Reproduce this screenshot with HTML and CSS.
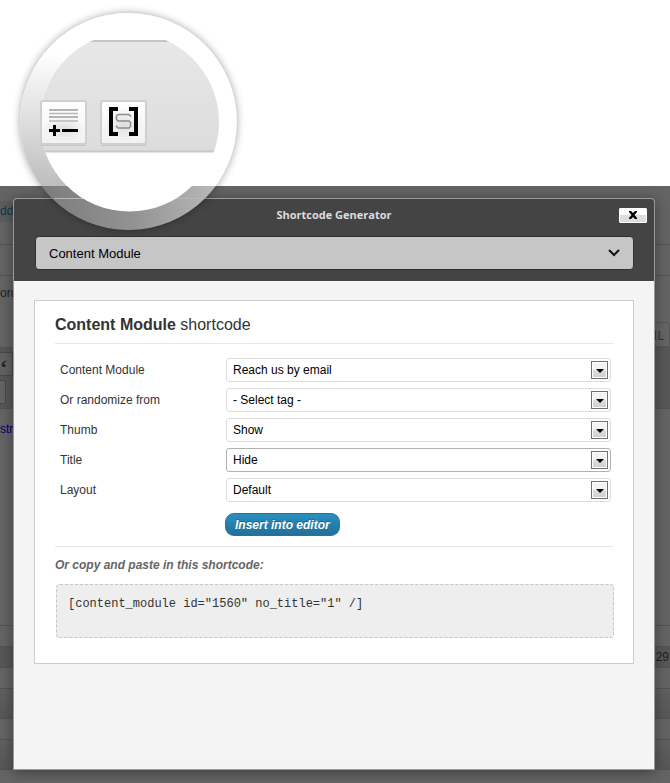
FILE: index.html
```html
<!DOCTYPE html>
<html lang="en">
<head>
<meta charset="utf-8">
<title>Shortcode Generator</title>
<link rel="stylesheet" href="styles.css">
</head>
<body>
<div class="stage">
  <div class="page" aria-hidden="true">
    <div class="row row-top"><span class="page-link">dd</span></div>
    <div class="row row-gap"></div>
    <div class="row row-words"><span>ord</span><span class="tab">HTML</span></div>
    <div class="row row-tools"><span class="tool">‘</span><span class="tool tool-small"></span></div>
    <div class="row row-editor">stru</div>
    <div class="row row-line"></div>
    <div class="row row-line row-dark"><span class="time">29</span></div>
    <div class="row row-line"></div>
    <div class="row row-head"></div>
    <div class="row row-line"></div>
    <div class="row row-head"></div>
    <div class="row row-last"></div>
  </div>

  <main class="dialog">
    <header class="dialog-head">
      <div class="title-bar">
        <h1>Shortcode Generator</h1>
        <button class="close" type="button" aria-label="Close">
          <svg width="10" height="8" viewBox="0 0 10 8"><path d="M1 0h2l2 2 2-2h2v1L6.500 4 9 7v1H7L5 6 3 8H1V7l2.500-3L1 1z"/></svg>
        </button>
      </div>
      <div class="picker">
        <select aria-label="Shortcode type"><option>Content Module</option></select>
        <svg class="chevron" width="12" height="8" viewBox="0 0 12 8"><path d="M1 1l5 5 5-5" fill="none" stroke="#111" stroke-width="2"/></svg>
      </div>
    </header>

    <form class="panel">
      <h2><strong>Content Module</strong> shortcode</h2>
      <div class="fields">
        <label for="module">Content Module</label>
        <div class="field"><select id="module"><option>Reach us by email</option></select><span class="arrow"></span></div>
        <label for="random">Or randomize from</label>
        <div class="field"><select id="random"><option>- Select tag -</option></select><span class="arrow"></span></div>
        <label for="thumb">Thumb</label>
        <div class="field"><select id="thumb"><option>Show</option></select><span class="arrow"></span></div>
        <label for="title">Title</label>
        <div class="field active"><select id="title"><option>Hide</option></select><span class="arrow"></span></div>
        <label for="layout">Layout</label>
        <div class="field"><select id="layout"><option>Default</option></select><span class="arrow"></span></div>
      </div>
      <button class="insert" type="button">Insert into editor</button>
      <div class="copy">
        <label for="code">Or copy and paste in this shortcode:</label>
        <textarea id="code" readonly>[content_module id="1560" no_title="1" /]</textarea>
      </div>
    </form>
  </main>
</div>

<svg class="lens" width="260" height="244" viewBox="0 0 260 244" aria-hidden="true">
  <defs>
    <linearGradient id="ringLight" gradientUnits="userSpaceOnUse" x1="45" y1="186" x2="62" y2="30">
      <stop offset="0" stop-color="#bdbdbd"/><stop offset=".4" stop-color="#dedede"/><stop offset=".85" stop-color="#fff"/>
    </linearGradient>
    <linearGradient id="ringDark" gradientUnits="userSpaceOnUse" x1="45" y1="200" x2="215" y2="186">
      <stop offset="0" stop-color="#7d7d7d"/><stop offset=".5" stop-color="#929292"/><stop offset="1" stop-color="#b8b8b8"/>
    </linearGradient>
    <linearGradient id="bar" x1="0" y1="0" x2="0" y2="1">
      <stop offset="0" stop-color="#e8e8e8"/><stop offset="1" stop-color="#dcdcdc"/>
    </linearGradient>
    <linearGradient id="key" x1="0" y1="0" x2="0" y2="1">
      <stop offset="0" stop-color="#fff"/><stop offset="1" stop-color="#f1f1f1"/>
    </linearGradient>
    <radialGradient id="keyShade"><stop offset="0" stop-color="#dedede"/><stop offset="1" stop-color="#dedede" stop-opacity="0"/></radialGradient>
    <filter id="soft" x="-20%" y="-20%" width="140%" height="140%"><feGaussianBlur stdDeviation="5"/></filter>
    <clipPath id="above"><path d="M0 0h260v186H0z"/></clipPath>
    <clipPath id="below"><path d="M0 186h260v58H0z"/></clipPath>
    <clipPath id="glass"><circle cx="129.500" cy="122" r="89.500"/></clipPath>
  </defs>
  <circle cx="128.500" cy="121.500" r="107" fill="#000" opacity=".5" filter="url(#soft)"/>
  <circle cx="128.500" cy="121.500" r="108.500" fill="#fff" clip-path="url(#above)"/>
  <path d="M128.500 13A108.500 108.500 0 0 0 128.500 230V121z" fill="url(#ringLight)" clip-path="url(#above)"/>
  <circle cx="128.500" cy="121.500" r="108.500" fill="url(#ringDark)" clip-path="url(#below)"/>
  <path d="M54 198.500H204" stroke="#b8b8b8"/>
  <g clip-path="url(#glass)">
    <path fill="#fff" d="M39 32h182v182H39z"/>
    <path fill="url(#bar)" d="M39 40h182v112H39z"/>
    <path d="M39 41h182" stroke="#c5c5c5" stroke-width="2"/>
    <path d="M39 151.500h182" stroke="#c8c8c8" stroke-width="2"/>
  </g>
  <g fill="url(#key)" stroke="#cfcfcf" stroke-width="2">
    <rect x="41" y="101" width="45" height="43" rx="2"/>
    <rect x="101" y="101" width="45" height="43" rx="2"/>
  </g>
  <ellipse cx="64" cy="129" rx="20" ry="12" fill="url(#keyShade)"/>
  <ellipse cx="124" cy="125" rx="20" ry="16" fill="url(#keyShade)"/>
  <path d="M49 110h29M49 117h29" stroke="#b4b4b4" stroke-width="2"/>
  <path d="M49 113.500h29M49 121h29" stroke="#b8b8b8" stroke-width="1.500"/>
  <path d="M49 129h4v-4h3v4h4v3h-4v4h-3v-4h-4zM62 129h16v3H62z"/>
  <path d="M109 107h9v4h-5v21h5v4h-9zM138 107h-9v4h5v21h-5v4h9z"/>
  <path d="M130.500 117v-1l-1.500-1.500h-11l-1.500 1.500v3.500l1.500 1.500h11l1.500 1.500v4l-1.500 1.500h-11l-1.500-1.500v-1" fill="none" stroke="#8b8b8b" stroke-width="1.500"/>
  <path d="M41 145.500h45M101 145.500h45" stroke="#c6c6c6"/>
</svg>
</body>
</html>
```

FILE: styles.css
```css
* { box-sizing: border-box; }

body {
  margin: 0;
  background: #fff;
  color: #333;
  font-family: "Liberation Sans", Arial, sans-serif;
  font-size: 12px;
}

.stage {
  position: relative;
  margin-top: 186px;
  padding: 12px 15px 13px 13px;
  background: #646464;
  overflow: hidden;
}

.page {
  position: absolute;
  inset: 0;
  display: flex;
  flex-direction: column;
  font-size: 12px;
  color: #222;
}

.row { flex: none; border-bottom: 1px solid #535353; }
.row-top { height: 59px; padding-top: 15px; }
.page-link { display: block; width: 13px; height: 21px; line-height: 21px; background: #5d5d5d; color: #0e3a4c; }
.row-gap { height: 31px; }
.row-words { height: 72px; display: flex; justify-content: space-between; padding-top: 10px; }
.tab {
  align-self: flex-end;
  height: 25px;
  padding: 0 5px;
  border: 1px solid #565656;
  border-radius: 3px 3px 0 0;
  font: 13px/25px "Open Sans", sans-serif;
  color: #333;
}
.row-tools { height: 61px; padding-top: 4px; background: #575757; }
.tool {
  display: block;
  width: 13px;
  height: 24px;
  margin-bottom: 4px;
  border: 1px solid #484848;
  border-left: 0;
  border-radius: 0 2px 2px 0;
  background: #626262;
  font: bold 22px/30px "Liberation Serif", serif;
}
.tool-small { width: 6px; }
.row-editor { height: 217px; padding-top: 13px; color: #00006b; }
.row-line { height: 21px; }
.row-dark { background: #575757; text-align: right; line-height: 20px; }
.time { padding-right: 1px; }
.row-head { height: 30px; background: linear-gradient(#606060, #575757); }
.row-last { flex: 1; border-bottom: 0; }

.dialog {
  position: relative;
  min-height: 572px;
  border: 1px solid #9a9a9a;
  border-radius: 4px 4px 0 0;
  background: #f4f4f4;
  box-shadow: 0 2px 14px rgba(0, 0, 0, 0.4);
}

.dialog-head {
  padding: 7px 20px 11px 21px;
  border-radius: 3px 3px 0 0;
  background: #444;
}

.title-bar {
  display: grid;
  grid-template-columns: 1fr auto 1fr;
  align-items: center;
  height: 30px;
  margin: 0 -13px 0 -14px;
  padding-bottom: 12px;
}

h1 {
  grid-column: 2;
  margin: 0;
  font: bold 11px/16px "Open Sans", sans-serif;
  color: #ddd;
}

.close {
  justify-self: end;
  display: grid;
  place-items: center;
  width: 28px;
  height: 15px;
  padding: 0;
  border: 1px solid #fff;
  border-radius: 1px;
  background: linear-gradient(#fff 50%, #ddd 50%);
}

.picker, .field { position: relative; }

select {
  display: block;
  width: 100%;
  appearance: none;
  color: #000;
  font: 12px "Liberation Sans", Arial, sans-serif;
}

.picker select {
  height: 34px;
  padding: 0 13px;
  border: 1px solid #303030;
  border-radius: 4px;
  background: #c6c6c6;
  font-size: 13px;
}

.chevron {
  position: absolute;
  right: 14px;
  top: 13px;
  pointer-events: none;
}

.panel {
  margin: 19px 20px 0;
  padding: 14px 20px 25px;
  border: 1px solid #ccc;
  background: #fff;
}

h2 {
  margin: 0 0 14px;
  padding-bottom: 8px;
  border-bottom: 1px solid #e8e8e8;
  font-size: 16px;
  font-weight: normal;
  line-height: 20px;
}

.fields {
  display: grid;
  grid-template-columns: 166px 1fr;
  row-gap: 6px;
  padding: 0 2px 0 5px;
}

.fields label { line-height: 24px; }

.fields select {
  height: 24px;
  padding: 0 6px;
  border: 1px solid #ddd;
  border-radius: 3px;
  background: #fff;
}

.fields .active select { border-color: #b0b0b0; }

.arrow {
  position: absolute;
  top: 3px;
  right: 3px;
  width: 17px;
  height: 18px;
  border: 1px solid #707070;
  background: linear-gradient(#f3f3f3 50%, #ddd 50%, #cfcfcf);
  box-shadow: inset 0 0 0 1px #fff;
  pointer-events: none;
}

.arrow::after {
  content: "";
  position: absolute;
  top: 7px;
  left: 4px;
  border: solid transparent;
  border-width: 4px 4px 0;
  border-top-color: #000;
}

.insert {
  display: block;
  height: 23px;
  margin: 11px 0 10px 170px;
  padding: 0 9px;
  border: 1px solid #21759b;
  border-radius: 9px;
  background: linear-gradient(#2a8fbf, #21709a);
  color: #fff;
  font: italic bold 12px "Liberation Sans", Arial, sans-serif;
  text-shadow: 0 -1px 0 rgba(0, 0, 0, 0.3);
}

.copy {
  padding-top: 10px;
  border-top: 1px solid #e8e8e8;
}

.copy label {
  display: block;
  color: #666;
  font-style: italic;
  font-weight: bold;
  line-height: 16px;
}

textarea {
  display: block;
  width: 100%;
  height: 54px;
  margin: 11px 0 0 1px;
  padding: 12px 11px;
  border: 1px dashed #c6c6c6;
  border-radius: 4px;
  background: #eee;
  color: #333;
  font: 12px/14px "Liberation Mono", "Courier New", monospace;
  resize: none;
}

.lens {
  position: absolute;
  top: 0;
  left: 0;
}
```
